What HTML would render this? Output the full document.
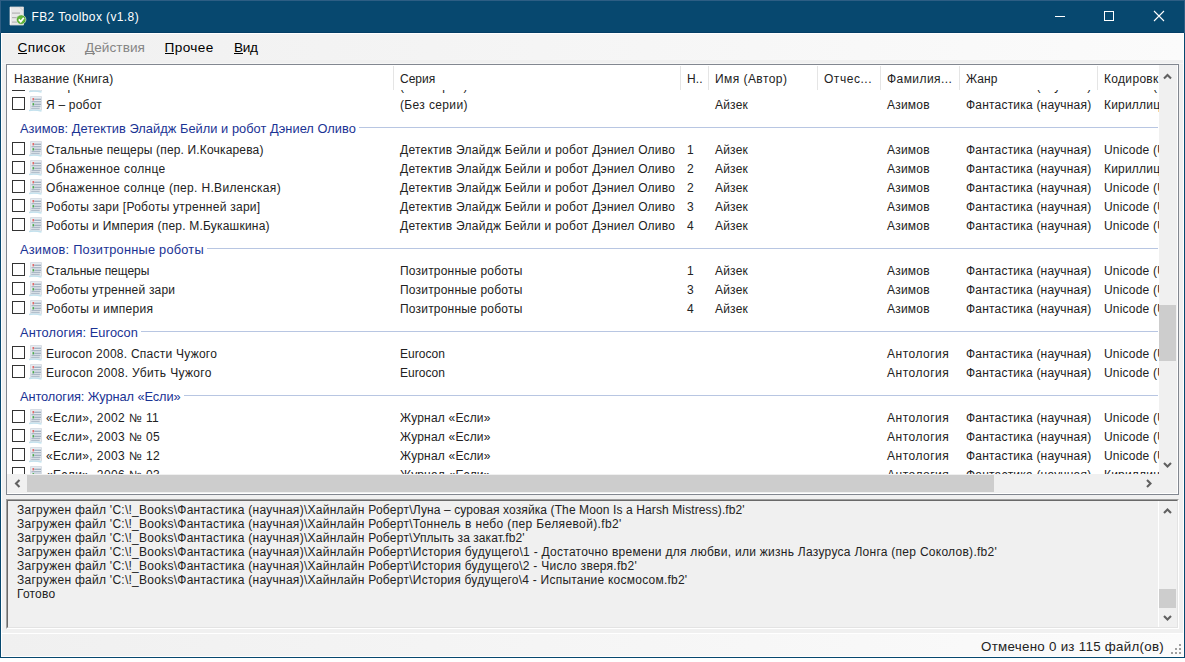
<!DOCTYPE html>
<html><head><meta charset="utf-8"><title>FB2 Toolbox</title>
<style>
html,body{margin:0;padding:0;background:#ffffff;width:1185px;height:662px;overflow:hidden}
.r{position:absolute}
.t{position:absolute;white-space:nowrap;font-family:"Liberation Sans", sans-serif;line-height:16px}
</style></head><body>
<div class="r" style="left:0px;top:0px;width:1185px;height:658px;background:#f0f0f0;"></div><div class="r" style="left:0px;top:0px;width:1185px;height:33px;background:#07486f;"></div><div class="r" style="left:0px;top:0px;width:1185px;height:1px;background:#2d5e84;"></div><div class="r" style="left:0px;top:1px;width:1px;height:32px;background:#2d5e84;"></div><div class="r" style="left:1184px;top:1px;width:1px;height:32px;background:#2d5e84;"></div><div class="r" style="left:1px;top:32px;width:1183px;height:1px;background:#043e66;"></div><div class="r" style="left:0px;top:33px;width:1px;height:625px;background:#07486f;"></div><div class="r" style="left:1184px;top:33px;width:1px;height:625px;background:#07486f;"></div><div class="r" style="left:0px;top:657px;width:1185px;height:1px;background:#07486f;"></div><svg class="r" style="left:9px;top:6px" width="18" height="21" viewBox="0 0 18 21">
<path d="M1 1 H14.5 V19 H1 Z" fill="#e8e8e8" stroke="#d4d4d4" stroke-width="0.8"/>
<path d="M1.5 1.5 V18.5" stroke="#fafafa" stroke-width="1"/>
<path d="M11 1.5 L14 4.5" stroke="#c0c0c0" stroke-width="0.8"/>
<rect x="3" y="6.5" width="8" height="1.2" fill="#b4b4b4"/><rect x="3" y="11" width="5" height="1.2" fill="#b4b4b4"/>
<rect x="3" y="15.5" width="5" height="1.2" fill="#b8b8b8"/>
<circle cx="12.2" cy="13.6" r="4.7" fill="#4f9e2a" stroke="#dfeedd" stroke-width="0.7"/>
<circle cx="12.2" cy="13.6" r="3.6" fill="#62b83a"/>
<path d="M9.8 13.4 L11.8 15.6 L14.8 11.8" fill="none" stroke="#ffffff" stroke-width="1.7"/>
</svg><div class="t" style="left:31.5px;top:9.44px;font-size:12px;letter-spacing:0.39px;color:#ffffff;">FB2 Toolbox (v1.8)</div><div class="r" style="left:1055px;top:16px;width:10px;height:1px;background:#ffffff;"></div><div class="r" style="left:1104px;top:11px;width:8px;height:8px;border:1px solid #fff"></div><svg class="r" style="left:1153px;top:10px" width="12" height="12" viewBox="0 0 12 12"><path d="M1 1 L11 11 M11 1 L1 11" stroke="#fff" stroke-width="1.1"/></svg><div class="r" style="left:1px;top:33px;width:1183px;height:1px;background:#ffffff;"></div><div class="r" style="left:1px;top:34px;width:1183px;height:26px;background:linear-gradient(to right,#f0f0f0,#fbfbfb);"></div><div class="r" style="left:2px;top:63px;width:1182px;height:1px;background:#f6f6f6;"></div><div class="t" style="left:17.5px;top:40.29px;font-size:13.6px;letter-spacing:0.45px;color:#000;">Список</div><div class="r" style="left:17.5px;top:53px;width:9px;height:1px;background:#000;"></div><div class="t" style="left:85px;top:40.29px;font-size:13.6px;letter-spacing:0.05px;color:#858585;">Действия</div><div class="r" style="left:85px;top:53px;width:10px;height:1px;background:#858585;"></div><div class="t" style="left:164.5px;top:40.29px;font-size:13.6px;letter-spacing:0.4px;color:#000;">Прочее</div><div class="r" style="left:164.5px;top:53px;width:9px;height:1px;background:#000;"></div><div class="t" style="left:234px;top:40.29px;font-size:13.6px;letter-spacing:-0.3px;color:#000;">Вид</div><div class="r" style="left:234px;top:53px;width:9px;height:1px;background:#000;"></div><div class="r" style="left:6px;top:64px;width:1173px;height:431px;background:#ffffff;box-sizing:border-box;border:1px solid #828790"></div><div class="r" style="left:7px;top:65px;width:1152px;height:409px;overflow:hidden;background:#fff"><div class="r" style="left:5px;top:13px;width:13px;height:13px;background:#fff;box-sizing:border-box;border:1px solid #333"></div><svg class="r" style="left:21px;top:12px" width="16" height="16" viewBox="0 0 16 16">
<path d="M2.5 0.5 H13.5 V14 H2.5 Z" fill="#e6ebf0" stroke="#d8dee5" stroke-width="1"/>
<rect x="4.5" y="2" width="1.6" height="2.4" fill="#e26a6a"/><rect x="6.2" y="2.6" width="6.8" height="1.4" fill="#a3b2c2"/>
<rect x="3.5" y="5" width="9.5" height="1.4" fill="#abb8c6"/>
<rect x="4.5" y="7.1" width="1.6" height="2.4" fill="#4caa4c"/><rect x="6.2" y="7.6" width="6.8" height="1.4" fill="#a3b2c2"/>
<rect x="3.5" y="9.7" width="9" height="1.4" fill="#abb8c6"/><rect x="3.2" y="11.8" width="8.5" height="1.3" fill="#b2bfcc"/>
<path d="M1 14.5 Q7 13.6 13.5 15" stroke="#c3e2ee" stroke-width="1.3" fill="none"/>
</svg><div class="t" style="left:39px;top:12.84px;font-size:12px;letter-spacing:0.2px;color:#222;">Избранное</div><div class="t" style="left:393px;top:12.84px;font-size:12px;letter-spacing:0.36px;color:#222;">(Без серии)</div><div class="t" style="left:708px;top:12.84px;font-size:12px;letter-spacing:0.2px;color:#222;">Айзек</div><div class="t" style="left:880px;top:12.84px;font-size:12px;letter-spacing:0.2px;color:#222;">Азимов</div><div class="t" style="left:959px;top:12.84px;font-size:12px;letter-spacing:0.2px;color:#222;">Фантастика (научная)</div><div class="t" style="left:1097px;top:12.84px;font-size:12px;letter-spacing:0.2px;color:#222;">Unicode (UTF-8)</div><div class="r" style="left:5px;top:32px;width:13px;height:13px;background:#fff;box-sizing:border-box;border:1px solid #333"></div><svg class="r" style="left:21px;top:31px" width="16" height="16" viewBox="0 0 16 16">
<path d="M2.5 0.5 H13.5 V14 H2.5 Z" fill="#e6ebf0" stroke="#d8dee5" stroke-width="1"/>
<rect x="4.5" y="2" width="1.6" height="2.4" fill="#e26a6a"/><rect x="6.2" y="2.6" width="6.8" height="1.4" fill="#a3b2c2"/>
<rect x="3.5" y="5" width="9.5" height="1.4" fill="#abb8c6"/>
<rect x="4.5" y="7.1" width="1.6" height="2.4" fill="#4caa4c"/><rect x="6.2" y="7.6" width="6.8" height="1.4" fill="#a3b2c2"/>
<rect x="3.5" y="9.7" width="9" height="1.4" fill="#abb8c6"/><rect x="3.2" y="11.8" width="8.5" height="1.3" fill="#b2bfcc"/>
<path d="M1 14.5 Q7 13.6 13.5 15" stroke="#c3e2ee" stroke-width="1.3" fill="none"/>
</svg><div class="t" style="left:39px;top:31.84px;font-size:12px;letter-spacing:0.2px;color:#222;">Я – робот</div><div class="t" style="left:393px;top:31.84px;font-size:12px;letter-spacing:0.36px;color:#222;">(Без серии)</div><div class="t" style="left:708px;top:31.84px;font-size:12px;letter-spacing:0.2px;color:#222;">Айзек</div><div class="t" style="left:880px;top:31.84px;font-size:12px;letter-spacing:0.2px;color:#222;">Азимов</div><div class="t" style="left:959px;top:31.84px;font-size:12px;letter-spacing:0.2px;color:#222;">Фантастика (научная)</div><div class="t" style="left:1097px;top:31.84px;font-size:12px;letter-spacing:0.2px;color:#222;">Кириллица</div><div class="t" style="left:13px;top:55.56px;font-size:12.8px;letter-spacing:0.05px;color:#1a3394;">Азимов: Детектив Элайдж Бейли и робот Дэниел Оливо</div><div class="r" style="left:352px;top:62px;width:799px;height:1px;background:#b8c6e2;"></div><div class="r" style="left:5px;top:77px;width:13px;height:13px;background:#fff;box-sizing:border-box;border:1px solid #333"></div><svg class="r" style="left:21px;top:76px" width="16" height="16" viewBox="0 0 16 16">
<path d="M2.5 0.5 H13.5 V14 H2.5 Z" fill="#e6ebf0" stroke="#d8dee5" stroke-width="1"/>
<rect x="4.5" y="2" width="1.6" height="2.4" fill="#e26a6a"/><rect x="6.2" y="2.6" width="6.8" height="1.4" fill="#a3b2c2"/>
<rect x="3.5" y="5" width="9.5" height="1.4" fill="#abb8c6"/>
<rect x="4.5" y="7.1" width="1.6" height="2.4" fill="#4caa4c"/><rect x="6.2" y="7.6" width="6.8" height="1.4" fill="#a3b2c2"/>
<rect x="3.5" y="9.7" width="9" height="1.4" fill="#abb8c6"/><rect x="3.2" y="11.8" width="8.5" height="1.3" fill="#b2bfcc"/>
<path d="M1 14.5 Q7 13.6 13.5 15" stroke="#c3e2ee" stroke-width="1.3" fill="none"/>
</svg><div class="t" style="left:39px;top:76.84px;font-size:12px;letter-spacing:0.164px;color:#222;">Стальные пещеры (пер. И.Кочкарева)</div><div class="t" style="left:393px;top:76.84px;font-size:12px;letter-spacing:0.256px;color:#222;">Детектив Элайдж Бейли и робот Дэниел Оливо</div><div class="t" style="left:680px;top:76.84px;font-size:12px;letter-spacing:0.2px;color:#222;">1</div><div class="t" style="left:708px;top:76.84px;font-size:12px;letter-spacing:0.2px;color:#222;">Айзек</div><div class="t" style="left:880px;top:76.84px;font-size:12px;letter-spacing:0.2px;color:#222;">Азимов</div><div class="t" style="left:959px;top:76.84px;font-size:12px;letter-spacing:0.2px;color:#222;">Фантастика (научная)</div><div class="t" style="left:1097px;top:76.84px;font-size:12px;letter-spacing:0.2px;color:#222;">Unicode (UTF-8)</div><div class="r" style="left:5px;top:96px;width:13px;height:13px;background:#fff;box-sizing:border-box;border:1px solid #333"></div><svg class="r" style="left:21px;top:95px" width="16" height="16" viewBox="0 0 16 16">
<path d="M2.5 0.5 H13.5 V14 H2.5 Z" fill="#e6ebf0" stroke="#d8dee5" stroke-width="1"/>
<rect x="4.5" y="2" width="1.6" height="2.4" fill="#e26a6a"/><rect x="6.2" y="2.6" width="6.8" height="1.4" fill="#a3b2c2"/>
<rect x="3.5" y="5" width="9.5" height="1.4" fill="#abb8c6"/>
<rect x="4.5" y="7.1" width="1.6" height="2.4" fill="#4caa4c"/><rect x="6.2" y="7.6" width="6.8" height="1.4" fill="#a3b2c2"/>
<rect x="3.5" y="9.7" width="9" height="1.4" fill="#abb8c6"/><rect x="3.2" y="11.8" width="8.5" height="1.3" fill="#b2bfcc"/>
<path d="M1 14.5 Q7 13.6 13.5 15" stroke="#c3e2ee" stroke-width="1.3" fill="none"/>
</svg><div class="t" style="left:39px;top:95.84px;font-size:12px;letter-spacing:0.344px;color:#222;">Обнаженное солнце</div><div class="t" style="left:393px;top:95.84px;font-size:12px;letter-spacing:0.256px;color:#222;">Детектив Элайдж Бейли и робот Дэниел Оливо</div><div class="t" style="left:680px;top:95.84px;font-size:12px;letter-spacing:0.2px;color:#222;">2</div><div class="t" style="left:708px;top:95.84px;font-size:12px;letter-spacing:0.2px;color:#222;">Айзек</div><div class="t" style="left:880px;top:95.84px;font-size:12px;letter-spacing:0.2px;color:#222;">Азимов</div><div class="t" style="left:959px;top:95.84px;font-size:12px;letter-spacing:0.2px;color:#222;">Фантастика (научная)</div><div class="t" style="left:1097px;top:95.84px;font-size:12px;letter-spacing:0.2px;color:#222;">Кириллица</div><div class="r" style="left:5px;top:115px;width:13px;height:13px;background:#fff;box-sizing:border-box;border:1px solid #333"></div><svg class="r" style="left:21px;top:114px" width="16" height="16" viewBox="0 0 16 16">
<path d="M2.5 0.5 H13.5 V14 H2.5 Z" fill="#e6ebf0" stroke="#d8dee5" stroke-width="1"/>
<rect x="4.5" y="2" width="1.6" height="2.4" fill="#e26a6a"/><rect x="6.2" y="2.6" width="6.8" height="1.4" fill="#a3b2c2"/>
<rect x="3.5" y="5" width="9.5" height="1.4" fill="#abb8c6"/>
<rect x="4.5" y="7.1" width="1.6" height="2.4" fill="#4caa4c"/><rect x="6.2" y="7.6" width="6.8" height="1.4" fill="#a3b2c2"/>
<rect x="3.5" y="9.7" width="9" height="1.4" fill="#abb8c6"/><rect x="3.2" y="11.8" width="8.5" height="1.3" fill="#b2bfcc"/>
<path d="M1 14.5 Q7 13.6 13.5 15" stroke="#c3e2ee" stroke-width="1.3" fill="none"/>
</svg><div class="t" style="left:39px;top:114.84px;font-size:12px;letter-spacing:0.326px;color:#222;">Обнаженное солнце (пер. Н.Виленская)</div><div class="t" style="left:393px;top:114.84px;font-size:12px;letter-spacing:0.256px;color:#222;">Детектив Элайдж Бейли и робот Дэниел Оливо</div><div class="t" style="left:680px;top:114.84px;font-size:12px;letter-spacing:0.2px;color:#222;">2</div><div class="t" style="left:708px;top:114.84px;font-size:12px;letter-spacing:0.2px;color:#222;">Айзек</div><div class="t" style="left:880px;top:114.84px;font-size:12px;letter-spacing:0.2px;color:#222;">Азимов</div><div class="t" style="left:959px;top:114.84px;font-size:12px;letter-spacing:0.2px;color:#222;">Фантастика (научная)</div><div class="t" style="left:1097px;top:114.84px;font-size:12px;letter-spacing:0.2px;color:#222;">Unicode (UTF-8)</div><div class="r" style="left:5px;top:134px;width:13px;height:13px;background:#fff;box-sizing:border-box;border:1px solid #333"></div><svg class="r" style="left:21px;top:133px" width="16" height="16" viewBox="0 0 16 16">
<path d="M2.5 0.5 H13.5 V14 H2.5 Z" fill="#e6ebf0" stroke="#d8dee5" stroke-width="1"/>
<rect x="4.5" y="2" width="1.6" height="2.4" fill="#e26a6a"/><rect x="6.2" y="2.6" width="6.8" height="1.4" fill="#a3b2c2"/>
<rect x="3.5" y="5" width="9.5" height="1.4" fill="#abb8c6"/>
<rect x="4.5" y="7.1" width="1.6" height="2.4" fill="#4caa4c"/><rect x="6.2" y="7.6" width="6.8" height="1.4" fill="#a3b2c2"/>
<rect x="3.5" y="9.7" width="9" height="1.4" fill="#abb8c6"/><rect x="3.2" y="11.8" width="8.5" height="1.3" fill="#b2bfcc"/>
<path d="M1 14.5 Q7 13.6 13.5 15" stroke="#c3e2ee" stroke-width="1.3" fill="none"/>
</svg><div class="t" style="left:39px;top:133.84px;font-size:12px;letter-spacing:0.255px;color:#222;">Роботы зари [Роботы утренней зари]</div><div class="t" style="left:393px;top:133.84px;font-size:12px;letter-spacing:0.256px;color:#222;">Детектив Элайдж Бейли и робот Дэниел Оливо</div><div class="t" style="left:680px;top:133.84px;font-size:12px;letter-spacing:0.2px;color:#222;">3</div><div class="t" style="left:708px;top:133.84px;font-size:12px;letter-spacing:0.2px;color:#222;">Айзек</div><div class="t" style="left:880px;top:133.84px;font-size:12px;letter-spacing:0.2px;color:#222;">Азимов</div><div class="t" style="left:959px;top:133.84px;font-size:12px;letter-spacing:0.2px;color:#222;">Фантастика (научная)</div><div class="t" style="left:1097px;top:133.84px;font-size:12px;letter-spacing:0.2px;color:#222;">Unicode (UTF-8)</div><div class="r" style="left:5px;top:153px;width:13px;height:13px;background:#fff;box-sizing:border-box;border:1px solid #333"></div><svg class="r" style="left:21px;top:152px" width="16" height="16" viewBox="0 0 16 16">
<path d="M2.5 0.5 H13.5 V14 H2.5 Z" fill="#e6ebf0" stroke="#d8dee5" stroke-width="1"/>
<rect x="4.5" y="2" width="1.6" height="2.4" fill="#e26a6a"/><rect x="6.2" y="2.6" width="6.8" height="1.4" fill="#a3b2c2"/>
<rect x="3.5" y="5" width="9.5" height="1.4" fill="#abb8c6"/>
<rect x="4.5" y="7.1" width="1.6" height="2.4" fill="#4caa4c"/><rect x="6.2" y="7.6" width="6.8" height="1.4" fill="#a3b2c2"/>
<rect x="3.5" y="9.7" width="9" height="1.4" fill="#abb8c6"/><rect x="3.2" y="11.8" width="8.5" height="1.3" fill="#b2bfcc"/>
<path d="M1 14.5 Q7 13.6 13.5 15" stroke="#c3e2ee" stroke-width="1.3" fill="none"/>
</svg><div class="t" style="left:39px;top:152.84px;font-size:12px;letter-spacing:0.2px;color:#222;">Роботы и Империя (пер. М.Букашкина)</div><div class="t" style="left:393px;top:152.84px;font-size:12px;letter-spacing:0.256px;color:#222;">Детектив Элайдж Бейли и робот Дэниел Оливо</div><div class="t" style="left:680px;top:152.84px;font-size:12px;letter-spacing:0.2px;color:#222;">4</div><div class="t" style="left:708px;top:152.84px;font-size:12px;letter-spacing:0.2px;color:#222;">Айзек</div><div class="t" style="left:880px;top:152.84px;font-size:12px;letter-spacing:0.2px;color:#222;">Азимов</div><div class="t" style="left:959px;top:152.84px;font-size:12px;letter-spacing:0.2px;color:#222;">Фантастика (научная)</div><div class="t" style="left:1097px;top:152.84px;font-size:12px;letter-spacing:0.2px;color:#222;">Unicode (UTF-8)</div><div class="t" style="left:13px;top:176.56px;font-size:12.8px;letter-spacing:0.22px;color:#1a3394;">Азимов: Позитронные роботы</div><div class="r" style="left:200px;top:183px;width:951px;height:1px;background:#b8c6e2;"></div><div class="r" style="left:5px;top:198px;width:13px;height:13px;background:#fff;box-sizing:border-box;border:1px solid #333"></div><svg class="r" style="left:21px;top:197px" width="16" height="16" viewBox="0 0 16 16">
<path d="M2.5 0.5 H13.5 V14 H2.5 Z" fill="#e6ebf0" stroke="#d8dee5" stroke-width="1"/>
<rect x="4.5" y="2" width="1.6" height="2.4" fill="#e26a6a"/><rect x="6.2" y="2.6" width="6.8" height="1.4" fill="#a3b2c2"/>
<rect x="3.5" y="5" width="9.5" height="1.4" fill="#abb8c6"/>
<rect x="4.5" y="7.1" width="1.6" height="2.4" fill="#4caa4c"/><rect x="6.2" y="7.6" width="6.8" height="1.4" fill="#a3b2c2"/>
<rect x="3.5" y="9.7" width="9" height="1.4" fill="#abb8c6"/><rect x="3.2" y="11.8" width="8.5" height="1.3" fill="#b2bfcc"/>
<path d="M1 14.5 Q7 13.6 13.5 15" stroke="#c3e2ee" stroke-width="1.3" fill="none"/>
</svg><div class="t" style="left:39px;top:197.84px;font-size:12px;letter-spacing:-0.06px;color:#222;">Стальные пещеры</div><div class="t" style="left:393px;top:197.84px;font-size:12px;letter-spacing:0.2px;color:#222;">Позитронные роботы</div><div class="t" style="left:680px;top:197.84px;font-size:12px;letter-spacing:0.2px;color:#222;">1</div><div class="t" style="left:708px;top:197.84px;font-size:12px;letter-spacing:0.2px;color:#222;">Айзек</div><div class="t" style="left:880px;top:197.84px;font-size:12px;letter-spacing:0.2px;color:#222;">Азимов</div><div class="t" style="left:959px;top:197.84px;font-size:12px;letter-spacing:0.2px;color:#222;">Фантастика (научная)</div><div class="t" style="left:1097px;top:197.84px;font-size:12px;letter-spacing:0.2px;color:#222;">Unicode (UTF-8)</div><div class="r" style="left:5px;top:217px;width:13px;height:13px;background:#fff;box-sizing:border-box;border:1px solid #333"></div><svg class="r" style="left:21px;top:216px" width="16" height="16" viewBox="0 0 16 16">
<path d="M2.5 0.5 H13.5 V14 H2.5 Z" fill="#e6ebf0" stroke="#d8dee5" stroke-width="1"/>
<rect x="4.5" y="2" width="1.6" height="2.4" fill="#e26a6a"/><rect x="6.2" y="2.6" width="6.8" height="1.4" fill="#a3b2c2"/>
<rect x="3.5" y="5" width="9.5" height="1.4" fill="#abb8c6"/>
<rect x="4.5" y="7.1" width="1.6" height="2.4" fill="#4caa4c"/><rect x="6.2" y="7.6" width="6.8" height="1.4" fill="#a3b2c2"/>
<rect x="3.5" y="9.7" width="9" height="1.4" fill="#abb8c6"/><rect x="3.2" y="11.8" width="8.5" height="1.3" fill="#b2bfcc"/>
<path d="M1 14.5 Q7 13.6 13.5 15" stroke="#c3e2ee" stroke-width="1.3" fill="none"/>
</svg><div class="t" style="left:39px;top:216.84px;font-size:12px;letter-spacing:0.2px;color:#222;">Роботы утренней зари</div><div class="t" style="left:393px;top:216.84px;font-size:12px;letter-spacing:0.2px;color:#222;">Позитронные роботы</div><div class="t" style="left:680px;top:216.84px;font-size:12px;letter-spacing:0.2px;color:#222;">3</div><div class="t" style="left:708px;top:216.84px;font-size:12px;letter-spacing:0.2px;color:#222;">Айзек</div><div class="t" style="left:880px;top:216.84px;font-size:12px;letter-spacing:0.2px;color:#222;">Азимов</div><div class="t" style="left:959px;top:216.84px;font-size:12px;letter-spacing:0.2px;color:#222;">Фантастика (научная)</div><div class="t" style="left:1097px;top:216.84px;font-size:12px;letter-spacing:0.2px;color:#222;">Unicode (UTF-8)</div><div class="r" style="left:5px;top:236px;width:13px;height:13px;background:#fff;box-sizing:border-box;border:1px solid #333"></div><svg class="r" style="left:21px;top:235px" width="16" height="16" viewBox="0 0 16 16">
<path d="M2.5 0.5 H13.5 V14 H2.5 Z" fill="#e6ebf0" stroke="#d8dee5" stroke-width="1"/>
<rect x="4.5" y="2" width="1.6" height="2.4" fill="#e26a6a"/><rect x="6.2" y="2.6" width="6.8" height="1.4" fill="#a3b2c2"/>
<rect x="3.5" y="5" width="9.5" height="1.4" fill="#abb8c6"/>
<rect x="4.5" y="7.1" width="1.6" height="2.4" fill="#4caa4c"/><rect x="6.2" y="7.6" width="6.8" height="1.4" fill="#a3b2c2"/>
<rect x="3.5" y="9.7" width="9" height="1.4" fill="#abb8c6"/><rect x="3.2" y="11.8" width="8.5" height="1.3" fill="#b2bfcc"/>
<path d="M1 14.5 Q7 13.6 13.5 15" stroke="#c3e2ee" stroke-width="1.3" fill="none"/>
</svg><div class="t" style="left:39px;top:235.84px;font-size:12px;letter-spacing:0.267px;color:#222;">Роботы и империя</div><div class="t" style="left:393px;top:235.84px;font-size:12px;letter-spacing:0.2px;color:#222;">Позитронные роботы</div><div class="t" style="left:680px;top:235.84px;font-size:12px;letter-spacing:0.2px;color:#222;">4</div><div class="t" style="left:708px;top:235.84px;font-size:12px;letter-spacing:0.2px;color:#222;">Айзек</div><div class="t" style="left:880px;top:235.84px;font-size:12px;letter-spacing:0.2px;color:#222;">Азимов</div><div class="t" style="left:959px;top:235.84px;font-size:12px;letter-spacing:0.2px;color:#222;">Фантастика (научная)</div><div class="t" style="left:1097px;top:235.84px;font-size:12px;letter-spacing:0.2px;color:#222;">Unicode (UTF-8)</div><div class="t" style="left:13px;top:259.56px;font-size:12.8px;letter-spacing:0.09px;color:#1a3394;">Антология: Eurocon</div><div class="r" style="left:134px;top:266px;width:1017px;height:1px;background:#b8c6e2;"></div><div class="r" style="left:5px;top:281px;width:13px;height:13px;background:#fff;box-sizing:border-box;border:1px solid #333"></div><svg class="r" style="left:21px;top:280px" width="16" height="16" viewBox="0 0 16 16">
<path d="M2.5 0.5 H13.5 V14 H2.5 Z" fill="#e6ebf0" stroke="#d8dee5" stroke-width="1"/>
<rect x="4.5" y="2" width="1.6" height="2.4" fill="#e26a6a"/><rect x="6.2" y="2.6" width="6.8" height="1.4" fill="#a3b2c2"/>
<rect x="3.5" y="5" width="9.5" height="1.4" fill="#abb8c6"/>
<rect x="4.5" y="7.1" width="1.6" height="2.4" fill="#4caa4c"/><rect x="6.2" y="7.6" width="6.8" height="1.4" fill="#a3b2c2"/>
<rect x="3.5" y="9.7" width="9" height="1.4" fill="#abb8c6"/><rect x="3.2" y="11.8" width="8.5" height="1.3" fill="#b2bfcc"/>
<path d="M1 14.5 Q7 13.6 13.5 15" stroke="#c3e2ee" stroke-width="1.3" fill="none"/>
</svg><div class="t" style="left:39px;top:280.84px;font-size:12px;letter-spacing:0.25px;color:#222;">Eurocon 2008. Спасти Чужого</div><div class="t" style="left:393px;top:280.84px;font-size:12px;letter-spacing:0.033px;color:#222;">Eurocon</div><div class="t" style="left:880px;top:280.84px;font-size:12px;letter-spacing:0.5px;color:#222;">Антология</div><div class="t" style="left:959px;top:280.84px;font-size:12px;letter-spacing:0.2px;color:#222;">Фантастика (научная)</div><div class="t" style="left:1097px;top:280.84px;font-size:12px;letter-spacing:0.2px;color:#222;">Unicode (UTF-8)</div><div class="r" style="left:5px;top:300px;width:13px;height:13px;background:#fff;box-sizing:border-box;border:1px solid #333"></div><svg class="r" style="left:21px;top:299px" width="16" height="16" viewBox="0 0 16 16">
<path d="M2.5 0.5 H13.5 V14 H2.5 Z" fill="#e6ebf0" stroke="#d8dee5" stroke-width="1"/>
<rect x="4.5" y="2" width="1.6" height="2.4" fill="#e26a6a"/><rect x="6.2" y="2.6" width="6.8" height="1.4" fill="#a3b2c2"/>
<rect x="3.5" y="5" width="9.5" height="1.4" fill="#abb8c6"/>
<rect x="4.5" y="7.1" width="1.6" height="2.4" fill="#4caa4c"/><rect x="6.2" y="7.6" width="6.8" height="1.4" fill="#a3b2c2"/>
<rect x="3.5" y="9.7" width="9" height="1.4" fill="#abb8c6"/><rect x="3.2" y="11.8" width="8.5" height="1.3" fill="#b2bfcc"/>
<path d="M1 14.5 Q7 13.6 13.5 15" stroke="#c3e2ee" stroke-width="1.3" fill="none"/>
</svg><div class="t" style="left:39px;top:299.84px;font-size:12px;letter-spacing:0.336px;color:#222;">Eurocon 2008. Убить Чужого</div><div class="t" style="left:393px;top:299.84px;font-size:12px;letter-spacing:0.033px;color:#222;">Eurocon</div><div class="t" style="left:880px;top:299.84px;font-size:12px;letter-spacing:0.5px;color:#222;">Антология</div><div class="t" style="left:959px;top:299.84px;font-size:12px;letter-spacing:0.2px;color:#222;">Фантастика (научная)</div><div class="t" style="left:1097px;top:299.84px;font-size:12px;letter-spacing:0.2px;color:#222;">Unicode (UTF-8)</div><div class="t" style="left:13px;top:323.56px;font-size:12.8px;letter-spacing:-0.087px;color:#1a3394;">Антология: Журнал «Если»</div><div class="r" style="left:177px;top:330px;width:974px;height:1px;background:#b8c6e2;"></div><div class="r" style="left:5px;top:345px;width:13px;height:13px;background:#fff;box-sizing:border-box;border:1px solid #333"></div><svg class="r" style="left:21px;top:344px" width="16" height="16" viewBox="0 0 16 16">
<path d="M2.5 0.5 H13.5 V14 H2.5 Z" fill="#e6ebf0" stroke="#d8dee5" stroke-width="1"/>
<rect x="4.5" y="2" width="1.6" height="2.4" fill="#e26a6a"/><rect x="6.2" y="2.6" width="6.8" height="1.4" fill="#a3b2c2"/>
<rect x="3.5" y="5" width="9.5" height="1.4" fill="#abb8c6"/>
<rect x="4.5" y="7.1" width="1.6" height="2.4" fill="#4caa4c"/><rect x="6.2" y="7.6" width="6.8" height="1.4" fill="#a3b2c2"/>
<rect x="3.5" y="9.7" width="9" height="1.4" fill="#abb8c6"/><rect x="3.2" y="11.8" width="8.5" height="1.3" fill="#b2bfcc"/>
<path d="M1 14.5 Q7 13.6 13.5 15" stroke="#c3e2ee" stroke-width="1.3" fill="none"/>
</svg><div class="t" style="left:39px;top:344.84px;font-size:12px;letter-spacing:0.406px;color:#222;">«Если», 2002 № 11</div><div class="t" style="left:393px;top:344.84px;font-size:12px;letter-spacing:0.2px;color:#222;">Журнал «Если»</div><div class="t" style="left:880px;top:344.84px;font-size:12px;letter-spacing:0.5px;color:#222;">Антология</div><div class="t" style="left:959px;top:344.84px;font-size:12px;letter-spacing:0.2px;color:#222;">Фантастика (научная)</div><div class="t" style="left:1097px;top:344.84px;font-size:12px;letter-spacing:0.2px;color:#222;">Unicode (UTF-8)</div><div class="r" style="left:5px;top:364px;width:13px;height:13px;background:#fff;box-sizing:border-box;border:1px solid #333"></div><svg class="r" style="left:21px;top:363px" width="16" height="16" viewBox="0 0 16 16">
<path d="M2.5 0.5 H13.5 V14 H2.5 Z" fill="#e6ebf0" stroke="#d8dee5" stroke-width="1"/>
<rect x="4.5" y="2" width="1.6" height="2.4" fill="#e26a6a"/><rect x="6.2" y="2.6" width="6.8" height="1.4" fill="#a3b2c2"/>
<rect x="3.5" y="5" width="9.5" height="1.4" fill="#abb8c6"/>
<rect x="4.5" y="7.1" width="1.6" height="2.4" fill="#4caa4c"/><rect x="6.2" y="7.6" width="6.8" height="1.4" fill="#a3b2c2"/>
<rect x="3.5" y="9.7" width="9" height="1.4" fill="#abb8c6"/><rect x="3.2" y="11.8" width="8.5" height="1.3" fill="#b2bfcc"/>
<path d="M1 14.5 Q7 13.6 13.5 15" stroke="#c3e2ee" stroke-width="1.3" fill="none"/>
</svg><div class="t" style="left:39px;top:363.84px;font-size:12px;letter-spacing:0.406px;color:#222;">«Если», 2003 № 05</div><div class="t" style="left:393px;top:363.84px;font-size:12px;letter-spacing:0.2px;color:#222;">Журнал «Если»</div><div class="t" style="left:880px;top:363.84px;font-size:12px;letter-spacing:0.5px;color:#222;">Антология</div><div class="t" style="left:959px;top:363.84px;font-size:12px;letter-spacing:0.2px;color:#222;">Фантастика (научная)</div><div class="t" style="left:1097px;top:363.84px;font-size:12px;letter-spacing:0.2px;color:#222;">Unicode (UTF-8)</div><div class="r" style="left:5px;top:383px;width:13px;height:13px;background:#fff;box-sizing:border-box;border:1px solid #333"></div><svg class="r" style="left:21px;top:382px" width="16" height="16" viewBox="0 0 16 16">
<path d="M2.5 0.5 H13.5 V14 H2.5 Z" fill="#e6ebf0" stroke="#d8dee5" stroke-width="1"/>
<rect x="4.5" y="2" width="1.6" height="2.4" fill="#e26a6a"/><rect x="6.2" y="2.6" width="6.8" height="1.4" fill="#a3b2c2"/>
<rect x="3.5" y="5" width="9.5" height="1.4" fill="#abb8c6"/>
<rect x="4.5" y="7.1" width="1.6" height="2.4" fill="#4caa4c"/><rect x="6.2" y="7.6" width="6.8" height="1.4" fill="#a3b2c2"/>
<rect x="3.5" y="9.7" width="9" height="1.4" fill="#abb8c6"/><rect x="3.2" y="11.8" width="8.5" height="1.3" fill="#b2bfcc"/>
<path d="M1 14.5 Q7 13.6 13.5 15" stroke="#c3e2ee" stroke-width="1.3" fill="none"/>
</svg><div class="t" style="left:39px;top:382.84px;font-size:12px;letter-spacing:0.406px;color:#222;">«Если», 2003 № 12</div><div class="t" style="left:393px;top:382.84px;font-size:12px;letter-spacing:0.2px;color:#222;">Журнал «Если»</div><div class="t" style="left:880px;top:382.84px;font-size:12px;letter-spacing:0.5px;color:#222;">Антология</div><div class="t" style="left:959px;top:382.84px;font-size:12px;letter-spacing:0.2px;color:#222;">Фантастика (научная)</div><div class="t" style="left:1097px;top:382.84px;font-size:12px;letter-spacing:0.2px;color:#222;">Unicode (UTF-8)</div><div class="r" style="left:5px;top:402px;width:13px;height:13px;background:#fff;box-sizing:border-box;border:1px solid #333"></div><svg class="r" style="left:21px;top:401px" width="16" height="16" viewBox="0 0 16 16">
<path d="M2.5 0.5 H13.5 V14 H2.5 Z" fill="#e6ebf0" stroke="#d8dee5" stroke-width="1"/>
<rect x="4.5" y="2" width="1.6" height="2.4" fill="#e26a6a"/><rect x="6.2" y="2.6" width="6.8" height="1.4" fill="#a3b2c2"/>
<rect x="3.5" y="5" width="9.5" height="1.4" fill="#abb8c6"/>
<rect x="4.5" y="7.1" width="1.6" height="2.4" fill="#4caa4c"/><rect x="6.2" y="7.6" width="6.8" height="1.4" fill="#a3b2c2"/>
<rect x="3.5" y="9.7" width="9" height="1.4" fill="#abb8c6"/><rect x="3.2" y="11.8" width="8.5" height="1.3" fill="#b2bfcc"/>
<path d="M1 14.5 Q7 13.6 13.5 15" stroke="#c3e2ee" stroke-width="1.3" fill="none"/>
</svg><div class="t" style="left:39px;top:401.84px;font-size:12px;letter-spacing:0.406px;color:#222;">«Если», 2006 № 03</div><div class="t" style="left:393px;top:401.84px;font-size:12px;letter-spacing:0.2px;color:#222;">Журнал «Если»</div><div class="t" style="left:880px;top:401.84px;font-size:12px;letter-spacing:0.5px;color:#222;">Антология</div><div class="t" style="left:959px;top:401.84px;font-size:12px;letter-spacing:0.2px;color:#222;">Фантастика (научная)</div><div class="t" style="left:1097px;top:401.84px;font-size:12px;letter-spacing:0.2px;color:#222;">Кириллица</div><div class="r" style="left:0px;top:0px;width:1152px;height:25px;background:#ffffff;"></div><div class="r" style="left:386px;top:1px;width:1px;height:24px;background:#e5e5e5;"></div><div class="r" style="left:673px;top:1px;width:1px;height:24px;background:#e5e5e5;"></div><div class="r" style="left:701px;top:1px;width:1px;height:24px;background:#e5e5e5;"></div><div class="r" style="left:810px;top:1px;width:1px;height:24px;background:#e5e5e5;"></div><div class="r" style="left:873px;top:1px;width:1px;height:24px;background:#e5e5e5;"></div><div class="r" style="left:952px;top:1px;width:1px;height:24px;background:#e5e5e5;"></div><div class="r" style="left:1090px;top:1px;width:1px;height:24px;background:#e5e5e5;"></div><div class="t" style="left:7px;top:5.84px;font-size:12px;letter-spacing:0.21px;color:#222;">Название (Книга)</div><div class="t" style="left:393px;top:5.84px;font-size:12px;letter-spacing:0.0px;color:#222;">Серия</div><div class="t" style="left:680px;top:5.84px;font-size:12px;letter-spacing:0.1px;color:#222;">Н..</div><div class="t" style="left:708px;top:5.84px;font-size:12px;letter-spacing:0.44px;color:#222;">Имя (Автор)</div><div class="t" style="left:817px;top:5.84px;font-size:12px;letter-spacing:0.53px;color:#222;">Отчес...</div><div class="t" style="left:880px;top:5.84px;font-size:12px;letter-spacing:0.43px;color:#222;">Фамилия...</div><div class="t" style="left:959px;top:5.84px;font-size:12px;letter-spacing:0.1px;color:#222;">Жанр</div><div class="t" style="left:1097px;top:5.84px;font-size:12px;letter-spacing:0.32px;color:#222;">Кодировка</div></div><div class="r" style="left:1159px;top:65px;width:18px;height:409px;background:#f0f0f0;"></div><div class="r" style="left:1159px;top:305px;width:17px;height:56px;background:#cdcdcd;"></div><svg class="r" style="left:1161px;top:70px" width="12" height="12"><path d="M3.0 8.5 L6.5 5.0 L10.0 8.5" stroke="#606060" stroke-width="2.1" fill="none"/></svg><svg class="r" style="left:1161px;top:459px" width="12" height="12"><path d="M3.0 4 L6.5 7.5 L10.0 4" stroke="#606060" stroke-width="2.1" fill="none"/></svg><div class="r" style="left:7px;top:474px;width:1152px;height:19px;background:#f0f0f0;"></div><div class="r" style="left:27px;top:475px;width:967px;height:17px;background:#cdcdcd;"></div><svg class="r" style="left:11px;top:477px" width="12" height="12"><path d="M8.5 3.0 L5.0 6.5 L8.5 10.0" stroke="#606060" stroke-width="2.1" fill="none"/></svg><svg class="r" style="left:1143px;top:477px" width="12" height="12"><path d="M4 3.0 L7.5 6.5 L4 10.0" stroke="#606060" stroke-width="2.1" fill="none"/></svg><div class="r" style="left:1159px;top:474px;width:18px;height:19px;background:#f0f0f0;"></div><div class="r" style="left:6px;top:499px;width:1173px;height:130px;background:#f0f0f0;box-sizing:border-box;border-top:1px solid #a0a0a0;border-left:1px solid #a0a0a0;border-right:1px solid #fff;border-bottom:1px solid #fff"></div><div class="r" style="left:7px;top:500px;width:1171px;height:128px;background:#f0f0f0;box-sizing:border-box;border-top:1px solid #696969;border-left:1px solid #696969;border-right:1px solid #e3e3e3;border-bottom:1px solid #e3e3e3"></div><div class="t" style="left:17px;top:501.84px;font-size:12px;color:#222"><span style="letter-spacing:0.26px">Загружен файл &#x27;C:\!_Books\Фантастика (научная)\Хайнлайн Роберт\</span><span style="letter-spacing:0.11px">Луна – суровая хозяйка (The Moon Is a Harsh Mistress).fb2&#x27;</span></div><div class="t" style="left:17px;top:515.84px;font-size:12px;color:#222"><span style="letter-spacing:0.26px">Загружен файл &#x27;C:\!_Books\Фантастика (научная)\Хайнлайн Роберт\</span><span style="letter-spacing:0.37px">Тоннель в небо (пер Беляевой).fb2&#x27;</span></div><div class="t" style="left:17px;top:529.84px;font-size:12px;color:#222"><span style="letter-spacing:0.26px">Загружен файл &#x27;C:\!_Books\Фантастика (научная)\Хайнлайн Роберт\</span><span style="letter-spacing:0.07px">Уплыть за закат.fb2&#x27;</span></div><div class="t" style="left:17px;top:543.84px;font-size:12px;color:#222"><span style="letter-spacing:0.26px">Загружен файл &#x27;C:\!_Books\Фантастика (научная)\Хайнлайн Роберт\</span><span style="letter-spacing:0.275px">История будущего\1 - Достаточно времени для любви, или жизнь Лазуруса Лонга (пер Соколов).fb2&#x27;</span></div><div class="t" style="left:17px;top:557.84px;font-size:12px;color:#222"><span style="letter-spacing:0.26px">Загружен файл &#x27;C:\!_Books\Фантастика (научная)\Хайнлайн Роберт\</span><span style="letter-spacing:0.26px">История будущего\2 - Число зверя.fb2&#x27;</span></div><div class="t" style="left:17px;top:571.84px;font-size:12px;color:#222"><span style="letter-spacing:0.26px">Загружен файл &#x27;C:\!_Books\Фантастика (научная)\Хайнлайн Роберт\</span><span style="letter-spacing:0.23px">История будущего\4 - Испытание космосом.fb2&#x27;</span></div><div class="t" style="left:17px;top:585.84px;font-size:12px;color:#222"><span style="letter-spacing:0.2px">Готово</span></div><div class="r" style="left:1158px;top:501px;width:1px;height:126px;background:#ffffff;"></div><div class="r" style="left:1159px;top:501px;width:18px;height:126px;background:#f0f0f0;"></div><div class="r" style="left:1159px;top:589px;width:17px;height:19px;background:#cdcdcd;"></div><svg class="r" style="left:1161px;top:505px" width="12" height="12"><path d="M3.0 8 L6.5 4.5 L10.0 8" stroke="#606060" stroke-width="2.1" fill="none"/></svg><svg class="r" style="left:1161px;top:612px" width="12" height="12"><path d="M3.0 4 L6.5 7.5 L10.0 4" stroke="#606060" stroke-width="2.1" fill="none"/></svg><div class="r" style="left:1px;top:633px;width:1183px;height:1px;background:#ffffff;"></div><div class="r" style="left:1px;top:634px;width:1183px;height:22px;background:linear-gradient(to right,#f0f0f0,#fbfbfb);"></div><div class="r" style="left:1px;top:656px;width:1183px;height:1px;background:#ffffff;"></div><div class="t" style="left:981px;top:639.38px;font-size:13.33px;letter-spacing:0.28px;color:#222;">Отмечено 0 из 115 файл(ов)</div><div class="r" style="left:1179px;top:644px;width:2px;height:2px;background:#a0a0a0;"></div><div class="r" style="left:1175px;top:648px;width:2px;height:2px;background:#a0a0a0;"></div><div class="r" style="left:1179px;top:648px;width:2px;height:2px;background:#a0a0a0;"></div><div class="r" style="left:1171px;top:652px;width:2px;height:2px;background:#a0a0a0;"></div><div class="r" style="left:1175px;top:652px;width:2px;height:2px;background:#a0a0a0;"></div><div class="r" style="left:1179px;top:652px;width:2px;height:2px;background:#a0a0a0;"></div><div class="r" style="left:1px;top:33px;width:1px;height:624px;background:#ffffff;"></div><div class="r" style="left:1183px;top:33px;width:1px;height:624px;background:#ffffff;"></div>
</body></html>
